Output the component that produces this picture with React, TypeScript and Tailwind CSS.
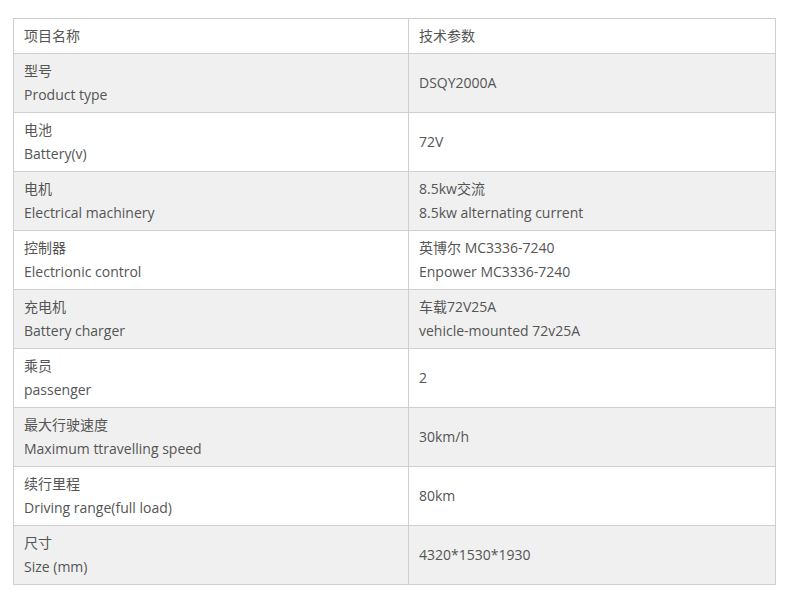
const rows: [string, string, string, string?][] = [
  ['型号', 'Product type', 'DSQY2000A'],
  ['电池', 'Battery(v)', '72V'],
  ['电机', 'Electrical machinery', '8.5kw交流', '8.5kw alternating current'],
  ['控制器', 'Electrionic control', '英博尔 MC3336-7240', 'Enpower MC3336-7240'],
  ['充电机', 'Battery charger', '车载72V25A', 'vehicle-mounted 72v25A'],
  ['乘员', 'passenger', '2'],
  ['最大行驶速度', 'Maximum ttravelling speed', '30km/h'],
  ['续行里程', 'Driving range(full load)', '80km'],
  ['尺寸', 'Size (mm)', '4320*1530*1930'],
];

export default function App() {
  return (
    <div
      className="bg-white pt-[18px] pl-[13px] w-[791px] h-[605px]"
      style={{ fontFamily: '"Open Sans", "Noto Sans CJK SC", sans-serif' }}
    >
      <table className="border-collapse text-[14px] leading-[24px] text-[#555] w-[763px]">
        <tbody>
          <tr className="h-[35px]">
            <td className="border border-[#cfcfcf] px-[10px] w-[395px]">项目名称</td>
            <td className="border border-[#cfcfcf] px-[10px]">技术参数</td>
          </tr>
          {rows.map(([zh, en, v1, v2], i) => (
            <tr key={zh} className={i % 2 === 0 ? 'bg-[#f0f0f0] h-[59px]' : 'bg-white h-[59px]'}>
              <td className="border border-[#cfcfcf] px-[10px] py-[5px]">
                <div>{zh}</div>
                <div>{en}</div>
              </td>
              <td className="border border-[#cfcfcf] px-[10px] py-[5px]">
                <div>{v1}</div>
                {v2 && <div>{v2}</div>}
              </td>
            </tr>
          ))}
        </tbody>
      </table>
    </div>
  );
}
